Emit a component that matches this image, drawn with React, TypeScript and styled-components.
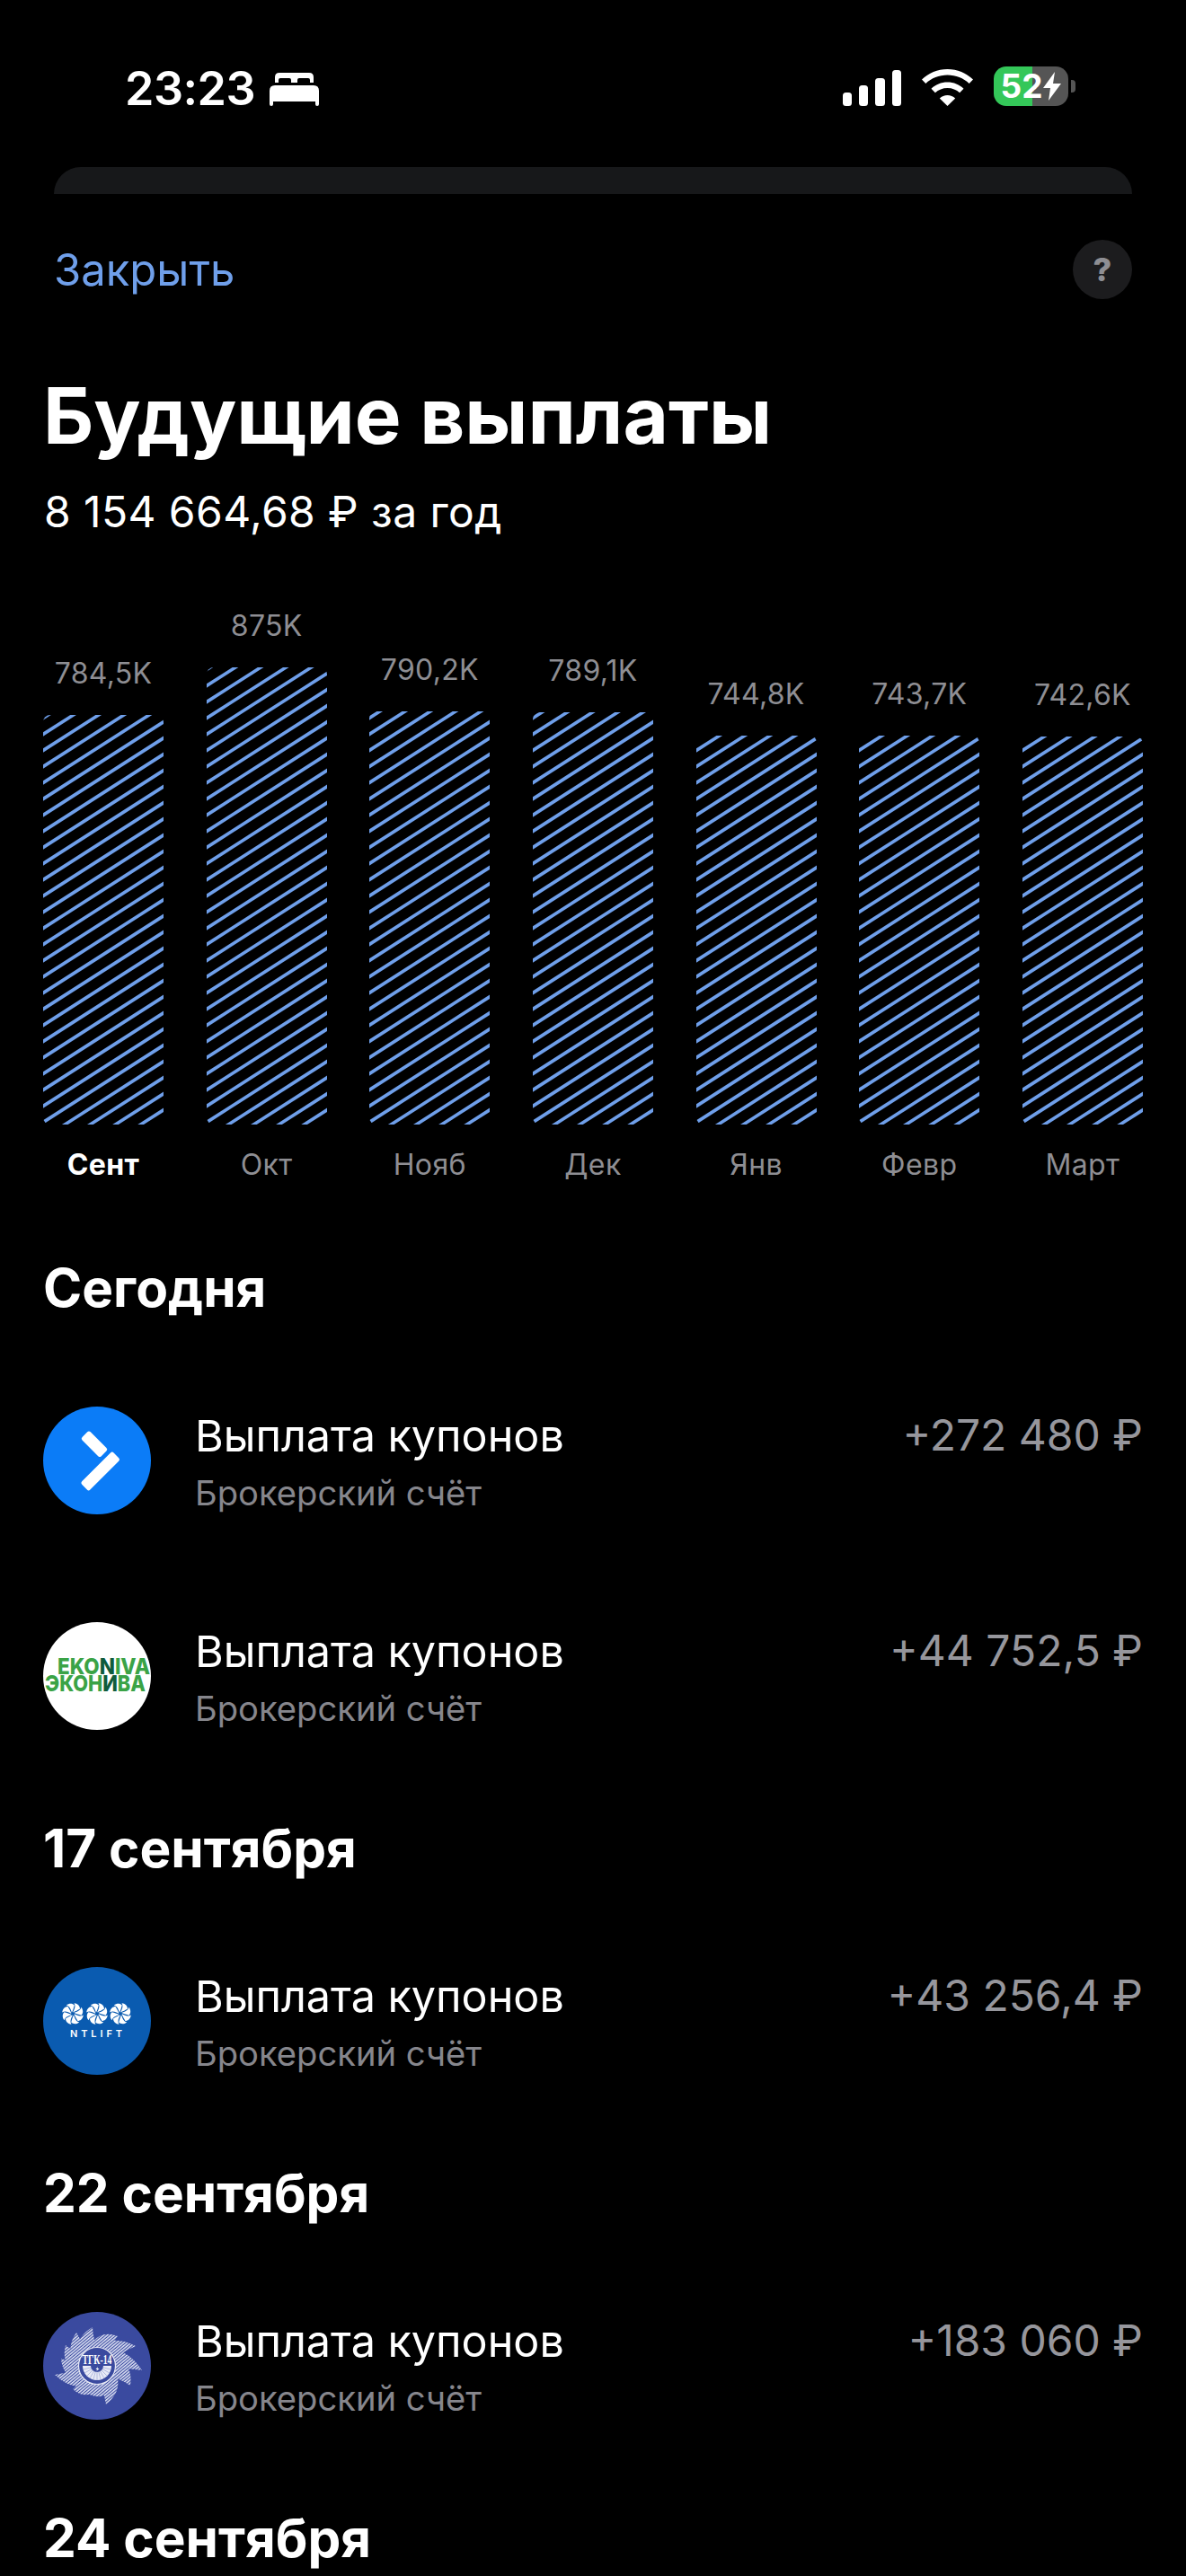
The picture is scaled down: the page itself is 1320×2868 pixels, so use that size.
import { createGlobalStyle, styled } from "styled-components";

const BAR_SCALE = 509 / 875;
const STRIPE_SLOPE = 0.64;
const STRIPE_STEP = 18;

const bars = [
  { value: 784.5, label: "784,5K", month: "Сент", active: true },
  { value: 875, label: "875K", month: "Окт" },
  { value: 790.2, label: "790,2K", month: "Нояб" },
  { value: 789.1, label: "789,1K", month: "Дек" },
  { value: 744.8, label: "744,8K", month: "Янв" },
  { value: 743.7, label: "743,7K", month: "Февр" },
  { value: 742.6, label: "742,6K", month: "Март" },
];

// left-edge y of every hatch line, counted up from below the bottom of a bar
const stripes = Array.from({ length: 40 }, (_, i) => 509 - 20.5 + 6 * STRIPE_STEP - i * STRIPE_STEP);

function App() {
  return (
    <>
      <GlobalStyle />
      <Screen>
        <StatusBar>
          <StatusLeft>
            <Clock>23:23</Clock>
            <BedIcon />
          </StatusLeft>
          <StatusRight>
            <SignalIcon />
            <WifiIcon />
            <Battery>
              <BatteryBody>
                <BatteryLevel>52</BatteryLevel>
                <BoltIcon />
              </BatteryBody>
              <BatteryNub />
            </Battery>
          </StatusRight>
        </StatusBar>

        <SheetEdge />

        <TopRow>
          <CloseLink>Закрыть</CloseLink>
          <HelpButton>?</HelpButton>
        </TopRow>

        <Title>Будущие выплаты</Title>
        <Subtitle>8 154 664,68 ₽ за год</Subtitle>

        <Chart>
          {bars.map((bar) => (
            <BarColumn key={bar.month}>
              <BarValue>{bar.label}</BarValue>
              <Bar style={{ height: Math.round(bar.value * BAR_SCALE) }}>
                <Hatch />
              </Bar>
              <BarMonth $active={bar.active}>{bar.month}</BarMonth>
            </BarColumn>
          ))}
        </Chart>

        <DayHeading>Сегодня</DayHeading>
        <Rows>
          <PaymentRow logo={<BlueLogo />} amount="+272 480 ₽" />
          <PaymentRow logo={<EkonivaLogo />} amount="+44 752,5 ₽" />
        </Rows>

        <DayHeading>17 сентября</DayHeading>
        <Rows>
          <PaymentRow logo={<NtliftLogo />} amount="+43 256,4 ₽" />
        </Rows>

        <DayHeading>22 сентября</DayHeading>
        <Rows>
          <PaymentRow logo={<TgkLogo />} amount="+183 060 ₽" />
        </Rows>

        <DayHeading>24 сентября</DayHeading>
      </Screen>
    </>
  );
}

function PaymentRow({ logo, amount }: { logo: React.ReactNode; amount: string }) {
  return (
    <Row>
      <LogoSlot>{logo}</LogoSlot>
      <RowText>
        <RowTitle>Выплата купонов</RowTitle>
        <RowSub>Брокерский счёт</RowSub>
      </RowText>
      <Amount>{amount}</Amount>
    </Row>
  );
}

function Hatch() {
  return (
    <HatchSvg width="134" height="509" viewBox="0 0 134 509">
      {stripes.map((y) => (
        <line key={y} x1="-2" y1={y + 2 * STRIPE_SLOPE} x2="136" y2={y - 136 * STRIPE_SLOPE} stroke="#6f9fea" strokeWidth="3.6" />
      ))}
    </HatchSvg>
  );
}

function BedIcon() {
  return (
    <svg width="55" height="37" viewBox="0 0 55 37" fill="#fff">
      <path d="M6 11V5q0-5 5-5h33q5 0 5 5v6h-4V8q0-2-2-2H33q-2 0-2 2v3h-7V8q0-2-2-2H12q-2 0-2 2v3z" />
      <path d="M0 20q0-6 6-6h43q6 0 6 6v15q0 2-2 2t-2-2v-3H4v3q0 2-2 2t-2-2z" />
    </svg>
  );
}

function SignalIcon() {
  return (
    <svg width="65" height="40" viewBox="0 0 65 40" fill="#fff">
      <rect x="0" y="25" width="10" height="15" rx="3.5" />
      <rect x="18" y="17" width="10" height="23" rx="3.5" />
      <rect x="36" y="9" width="11" height="31" rx="3.5" />
      <rect x="55" y="0" width="10" height="40" rx="3.5" />
    </svg>
  );
}

function WifiIcon() {
  return (
    <svg width="57" height="41" viewBox="0 0 57 41" fill="#fff">
      <path d="M28.5 0C39.5 0 49.5 4.3 57 11.5l-4.3 4.6C46.3 10 37.9 6.6 28.5 6.6S10.7 10 4.3 16.1L0 11.5C7.5 4.3 17.5 0 28.5 0z" />
      <path d="M28.5 14.5c7 0 13.3 2.7 18 7.2l-4.4 4.6c-3.5-3.4-8.3-5.4-13.6-5.4s-10.1 2-13.6 5.4l-4.4-4.6c4.7-4.5 11-7.2 18-7.2z" />
      <path d="M28.5 29c3.3 0 6.4 1.3 8.7 3.5L28.5 41l-8.7-8.5c2.3-2.2 5.4-3.5 8.7-3.5z" />
    </svg>
  );
}

function BoltIcon() {
  return (
    <BoltSvg width="20" height="32" viewBox="0 0 20 32" fill="#fff">
      <path d="M13 0 0 18h8L6 32 20 13h-9z" />
    </BoltSvg>
  );
}

function BlueLogo() {
  return (
    <svg width="120" height="120" viewBox="0 0 120 120">
      <circle cx="60" cy="60" r="60" fill="#0b7cf7" />
      <rect x="42" y="35.2" width="30" height="13" rx="2.5" transform="rotate(45 57 41.7)" fill="#fff" />
      <rect x="38.7" y="65.5" width="50" height="13" rx="2.5" transform="rotate(-45 63.7 72)" fill="#fff" />
    </svg>
  );
}

function EkonivaLogo() {
  return (
    <svg width="120" height="120" viewBox="0 0 120 120">
      <circle cx="60" cy="60" r="60" fill="#fff" />
      <g fontFamily="Inter, sans-serif" fontWeight="800" fontSize="25" fill="#3aa346">
        <text x="16" y="57.5" textLength="103" lengthAdjust="spacingAndGlyphs">
          EKO<tspan fill="#0f5b3c">N</tspan>IVA
        </text>
        <text x="2" y="76.5" textLength="112" lengthAdjust="spacingAndGlyphs">
          ЭКОН<tspan fill="#0f5b3c">И</tspan>ВА
        </text>
      </g>
    </svg>
  );
}

function Pinwheel({ cx, cy }: { cx: number; cy: number }) {
  const blades = [0, 45, 90, 135, 180, 225, 270, 315];
  return (
    <g transform={`translate(${cx} ${cy})`} fill="#fff">
      {blades.map((a) => (
        <path key={a} transform={`rotate(${a})`} d="M0 -1.6C2 -5 3.5 -8.5 1.5 -11.8C6 -11.2 8 -8.2 8 -5.5C5.5 -4 3 -2.5 0 -1.6z" />
      ))}
    </g>
  );
}

function NtliftLogo() {
  return (
    <svg width="120" height="120" viewBox="0 0 120 120">
      <circle cx="60" cy="60" r="60" fill="#0a5bb0" />
      <Pinwheel cx={33} cy={52} />
      <Pinwheel cx={60} cy={52} />
      <Pinwheel cx={86} cy={52} />
      <text x="30" y="77.5" fill="#fff" fontFamily="Inter, sans-serif" fontWeight="600" fontSize="11" textLength="58">
        NTLIFT
      </text>
    </svg>
  );
}

const sunPath = (() => {
  // blade tips taken from the logo: each one sweeps clockwise out of the ring
  const tips = [
    [55, 17],
    [83, 27],
    [103, 38],
    [110, 65],
    [97, 82],
    [70, 103],
    [52, 92],
    [33, 86],
    [13, 70],
    [20, 52],
    [25, 37],
    [37, 23],
  ];
  const polar = (a: number, r: number) => `${(60 + Math.cos(a) * r).toFixed(1)} ${(60 + Math.sin(a) * r).toFixed(1)}`;
  const angles = tips.map(([x, y]) => Math.atan2(y - 60, x - 60));
  let d = "";
  tips.forEach(([x, y], i) => {
    const a = angles[i];
    d += `${i === 0 ? "M" : "L"}${polar(a - 0.75, 28)} Q${polar(a - 0.45, 40)} ${x} ${y} Q${polar(a - 0.02, 37)} ${polar(a + 0.02, 28)} `;
  });
  return d + "Z";
})();

// short dark cuts that split the half-moon under the logo's lettering
const moonCuts = Array.from({ length: 11 }, (_, i) => (Math.PI * (i + 1)) / 12);

function TgkLogo() {
  return (
    <svg width="120" height="120" viewBox="0 0 120 120">
      <defs>
        <pattern id="sunHatch" width="2.6" height="2.6" patternUnits="userSpaceOnUse" patternTransform="rotate(-40)">
          <rect width="2.6" height="1.5" fill="#dfe3f4" />
        </pattern>
      </defs>
      <circle cx="60" cy="60" r="60" fill="#3a4a9f" />
      <path d={sunPath} fill="url(#sunHatch)" />
      <circle cx="60" cy="60" r="20.5" fill="#3a4a9f" stroke="#e8eaf6" strokeWidth="1.2" />
      <path d="M44 60h32a16 16 0 0 1-32 0z" fill="#e8eaf6" />
      {moonCuts.map((a) => (
        <line key={a} x1={60 + Math.cos(a) * 7} y1={60 + Math.sin(a) * 7} x2={60 + Math.cos(a) * 16} y2={60 + Math.sin(a) * 16} stroke="#8f9ad0" strokeWidth="0.6" />
      ))}
      <path d="M53 60a7 7 0 0 0 14 0z" fill="#3a4a9f" />
      <path d="M61 61l-2.5 3h2l-1.5 2.5 3.5-3.5h-2z" fill="#fff" />
      <text x="43.5" y="57.5" fill="#fff" fontFamily="Liberation Serif, serif" fontWeight="700" fontSize="14.5" textLength="33" lengthAdjust="spacingAndGlyphs">
        ТГК-14
      </text>
    </svg>
  );
}

const GlobalStyle = createGlobalStyle`
  html, body {
    margin: 0;
    padding: 0;
    background: #000;
  }
  body {
    font-family: Inter, "Noto Sans", sans-serif;
    color: #fff;
  }
`;

const Screen = styled.div`
  width: 1320px;
  height: 2868px;
  overflow: hidden;
  background: #000;
  display: flex;
  flex-direction: column;

  > * {
    flex: none;
  }
`;

const StatusBar = styled.div`
  height: 186px;
  padding: 74px 123px 0 139px;
  box-sizing: border-box;
  display: flex;
  justify-content: space-between;
  align-items: flex-start;
`;

const StatusLeft = styled.div`
  display: flex;
  align-items: center;
  gap: 16px;
  height: 50px;
`;

const Clock = styled.span`
  font-size: 52px;
  font-weight: 600;
  line-height: 50px;
  letter-spacing: -0.5px;
`;

const StatusRight = styled.div`
  display: flex;
  align-items: flex-end;
  gap: 23px;
  height: 44px;
`;

const Battery = styled.div`
  display: flex;
  align-items: center;
  gap: 3px;
`;

const BatteryBody = styled.div`
  width: 83px;
  height: 44px;
  border-radius: 14px;
  background: linear-gradient(90deg, #34c759 0, #34c759 43px, #555 43px);
  display: flex;
  align-items: center;
  justify-content: center;
  gap: 1px;
`;

const BatteryLevel = styled.span`
  font-size: 37px;
  font-weight: 700;
  line-height: 44px;
`;

const BoltSvg = styled.svg`
  flex: none;
`;

const BatteryNub = styled.div`
  width: 5px;
  height: 14px;
  border-radius: 0 4px 4px 0;
  background: #555;
`;

const SheetEdge = styled.div`
  height: 30px;
  margin: 0 60px;
  background: #17181a;
  border-radius: 30px 30px 0 0;
`;

const TopRow = styled.div`
  margin-top: 51px;
  padding: 0 60px;
  height: 66px;
  display: flex;
  justify-content: space-between;
  align-items: center;
`;

const CloseLink = styled.span`
  font-size: 49px;
  color: #6f9fea;
`;

const HelpButton = styled.div`
  width: 66px;
  height: 66px;
  border-radius: 50%;
  background: #1c1c1e;
  color: #8e8e93;
  font-size: 36px;
  font-weight: 800;
  display: flex;
  align-items: center;
  justify-content: center;
`;

const Title = styled.h1`
  margin: 82px 0 0;
  padding: 0 48px;
  font-size: 87px;
  line-height: 96px;
  font-weight: 700;
`;

const Subtitle = styled.div`
  margin-top: 29px;
  padding: 0 49px;
  font-size: 48px;
  line-height: 60px;
  letter-spacing: 0.4px;
`;

const Chart = styled.div`
  height: 710px;
  padding: 0 48px;
  box-sizing: border-box;
  display: flex;
  justify-content: space-between;
  align-items: flex-end;
`;

const BarColumn = styled.div`
  width: 134px;
  display: flex;
  flex-direction: column;
  align-items: center;
`;

const BarValue = styled.div`
  font-size: 32px;
  line-height: 40px;
  margin-bottom: 26px;
  letter-spacing: 0.3px;
  color: #8e8e93;
  white-space: nowrap;
`;

const Bar = styled.div`
  width: 134px;
  position: relative;
  overflow: hidden;
  border-radius: 8px;
`;

const HatchSvg = styled.svg`
  position: absolute;
  left: 0;
  bottom: 0;
  display: block;
`;

const BarMonth = styled.div<{ $active?: boolean }>`
  margin-top: 32px;
  font-size: 32px;
  line-height: 26px;
  letter-spacing: 0.4px;
  font-weight: ${({ $active }) => ($active ? 700 : 400)};
  color: ${({ $active }) => ($active ? "#fff" : "#8e8e93")};
`;

const DayHeading = styled.h2`
  margin: 96px 0;
  padding: 0 48px;
  font-size: 58.5px;
  line-height: 72px;
  font-weight: 700;

  ${Chart} + & {
    margin-top: 88px;
  }
`;

const Rows = styled.div`
  display: flex;
  flex-direction: column;
  gap: 120px;
  padding: 0 48px;
`;

const Row = styled.div`
  height: 120px;
  display: flex;
  align-items: center;
`;

const LogoSlot = styled.div`
  width: 120px;
  height: 120px;
  flex: none;
  margin-right: 49px;

  svg {
    display: block;
  }
`;

const RowText = styled.div`
  flex: 1;
  padding-top: 2px;
`;

const RowTitle = styled.div`
  font-size: 48.5px;
  line-height: 60px;
`;

const RowSub = styled.div`
  margin-top: 9px;
  font-size: 38.2px;
  line-height: 48px;
  color: #86868c;
`;

const Amount = styled.div`
  align-self: flex-start;
  margin-top: 2px;
  font-size: 48px;
  line-height: 60px;
  color: #96969c;
`;

export default App;
